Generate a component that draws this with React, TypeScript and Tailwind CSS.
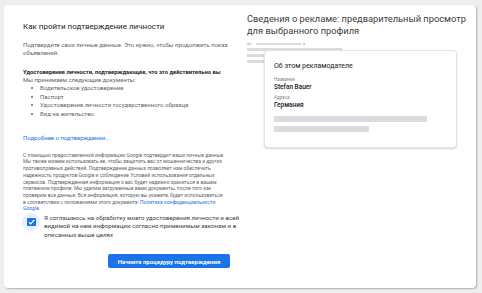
import React from "react";

const font = { fontFamily: "Roboto, 'Noto Sans', Arial, sans-serif" };

export default function App() {
  return (
    <div className="w-[482px] h-[293px] bg-[#efefef] pt-[5px] pl-[4px] pr-[6px] pb-[5px] overflow-hidden" style={font}>
      <div className="w-full h-full bg-white rounded-[4px] shadow-[1px_1px_2px_rgba(0,0,0,0.28)] flex">
        {/* Left column */}
        <div className="w-[237px] pl-[19px] pr-[7px] pt-[17px] flex flex-col">
          <div className="text-[8px] leading-[10px] text-[#202124]">Как пройти подтверждение личности</div>
          <div className="mt-[9px] text-[6px] leading-[8px] text-[#5f6368]">
            Подтвердите свои личные данные. Это нужно, чтобы продолжить показ
            <br />
            объявлений.
          </div>
          <div className="mt-[11px] text-[5.8px] leading-[8px] font-bold text-[#202124] whitespace-nowrap">
            Удостоверение личности, подтверждающее, что это действительно вы
          </div>
          <div className="text-[6px] leading-[8px] text-[#5f6368]">Мы принимаем следующие документы:</div>
          <ul className="text-[6px] leading-[8.7px] text-[#5f6368] pl-[8px] list-disc list-inside">
            <li>Водительское удостоверение</li>
            <li>Паспорт</li>
            <li>Удостоверение личности государственного образца</li>
            <li>Вид на жительство</li>
          </ul>
          <div className="mt-[15px] text-[6px] leading-[8px] text-[#1a73e8]">Подробнее о подтверждении...</div>
          <div className="mt-[10px] text-[5px] leading-[6.67px] text-[#5f6368] whitespace-nowrap">
            С помощью предоставленной информации Google подтвердит ваши личные данные.
            <br />
            Мы также можем использовать ее, чтобы защитить вас от мошенничества и других
            <br />
            противоправных действий. Подтверждение данных позволяет нам обеспечить
            <br />
            надежность продуктов Google и соблюдение Условий использования отдельных
            <br />
            сервисов. Подтвержденная информация о вас будет надежно храниться в вашем
            <br />
            платежном профиле. Мы удалим загруженные вами документы, после того как
            <br />
            проверим все данные. Вся информация, которую вы укажете, будет использоваться
            <br />
            в соответствии с положениями этого документа: <span className="text-[#1a73e8]">Политика конфиденциальности</span>
            <br />
            <span className="text-[#1a73e8]">Google</span>.
          </div>
          <div className="mt-[2px] flex items-start">
            <div className="w-[18px] h-[18px] -ml-[1px] mt-[-1px] rounded-full bg-[#e8f0fe] flex items-center justify-center shrink-0">
              <div className="w-[9px] h-[8px] rounded-[1px] bg-[#1a73e8] flex items-center justify-center">
                <svg width="7" height="6" viewBox="0 0 7 6">
                  <path d="M0.8 3.1 L2.7 4.9 L6.2 1" fill="none" stroke="white" strokeWidth="1.2" />
                </svg>
              </div>
            </div>
            <div className="ml-[4px] text-[6.2px] leading-[8.5px] text-[#3c4043] whitespace-nowrap">
              Я соглашаюсь на обработку моего удостоверения личности и всей
              <br />
              видимой на нем информации согласно применимым законам и в
              <br />
              описанных выше целях
            </div>
          </div>
          <div className="mt-[15px] flex justify-end pr-[4px]">
            <div className="w-[122px] h-[14px] bg-[#1a73e8] rounded-[2px] flex items-center justify-center text-white text-[6px] font-bold">
              Начните процедуру подтверждения
            </div>
          </div>
        </div>
        {/* Right column */}
        <div className="flex-1 pl-[6px] pt-[8px]">
          <div className="text-[9.3px] leading-[12px] text-[#3c4043] whitespace-nowrap">
            Сведения о рекламе: предварительный просмотр
            <br />
            для выбранного профиля
          </div>
          <div className="relative mt-[5px] h-[110px]">
            <div className="flex items-center h-[4px]">
              <span className="text-[3.5px] text-[#9aa0a6] leading-[4px]">Ad</span>
              <div className="ml-[5px] w-[45px] h-[2px] bg-[#dadce0]" />
              <span className="ml-[2px] text-[3.5px] text-[#9aa0a6] leading-[4px]">▾</span>
            </div>
            <div className="mt-[2px] w-[95px] h-[3px] bg-[#dadce0]" />
            <div className="mt-[3px] w-[40px] h-[3px] bg-[#dadce0]" />
            <div className="mt-[3px] w-[40px] h-[3px] bg-[#dadce0]" />
            <div className="absolute left-[17px] top-[8px] w-[193px] h-[98px] bg-white rounded-[4px] border border-[#e4e4e4] shadow-[0_1px_2px_rgba(0,0,0,0.18)] pl-[9px] pt-[10px]">
              <div className="text-[7px] leading-[10px] text-[#202124]">Об этом рекламодателе</div>
              <div className="mt-[6px] text-[4.5px] leading-[6px] text-[#80868b]">Название</div>
              <div className="text-[6.5px] leading-[9px] font-medium text-[#202124]">Stefan Bauer</div>
              <div className="mt-[3px] text-[4.5px] leading-[6px] text-[#80868b]">Адреса</div>
              <div className="text-[6.5px] leading-[9px] font-medium text-[#202124]">Германия</div>
              <div className="mt-[6px] w-[153px] h-[6px] bg-[#dadce0]" />
              <div className="mt-[4px] w-[95px] h-[6px] bg-[#dadce0]" />
            </div>
          </div>
        </div>
      </div>
    </div>
  );
}
